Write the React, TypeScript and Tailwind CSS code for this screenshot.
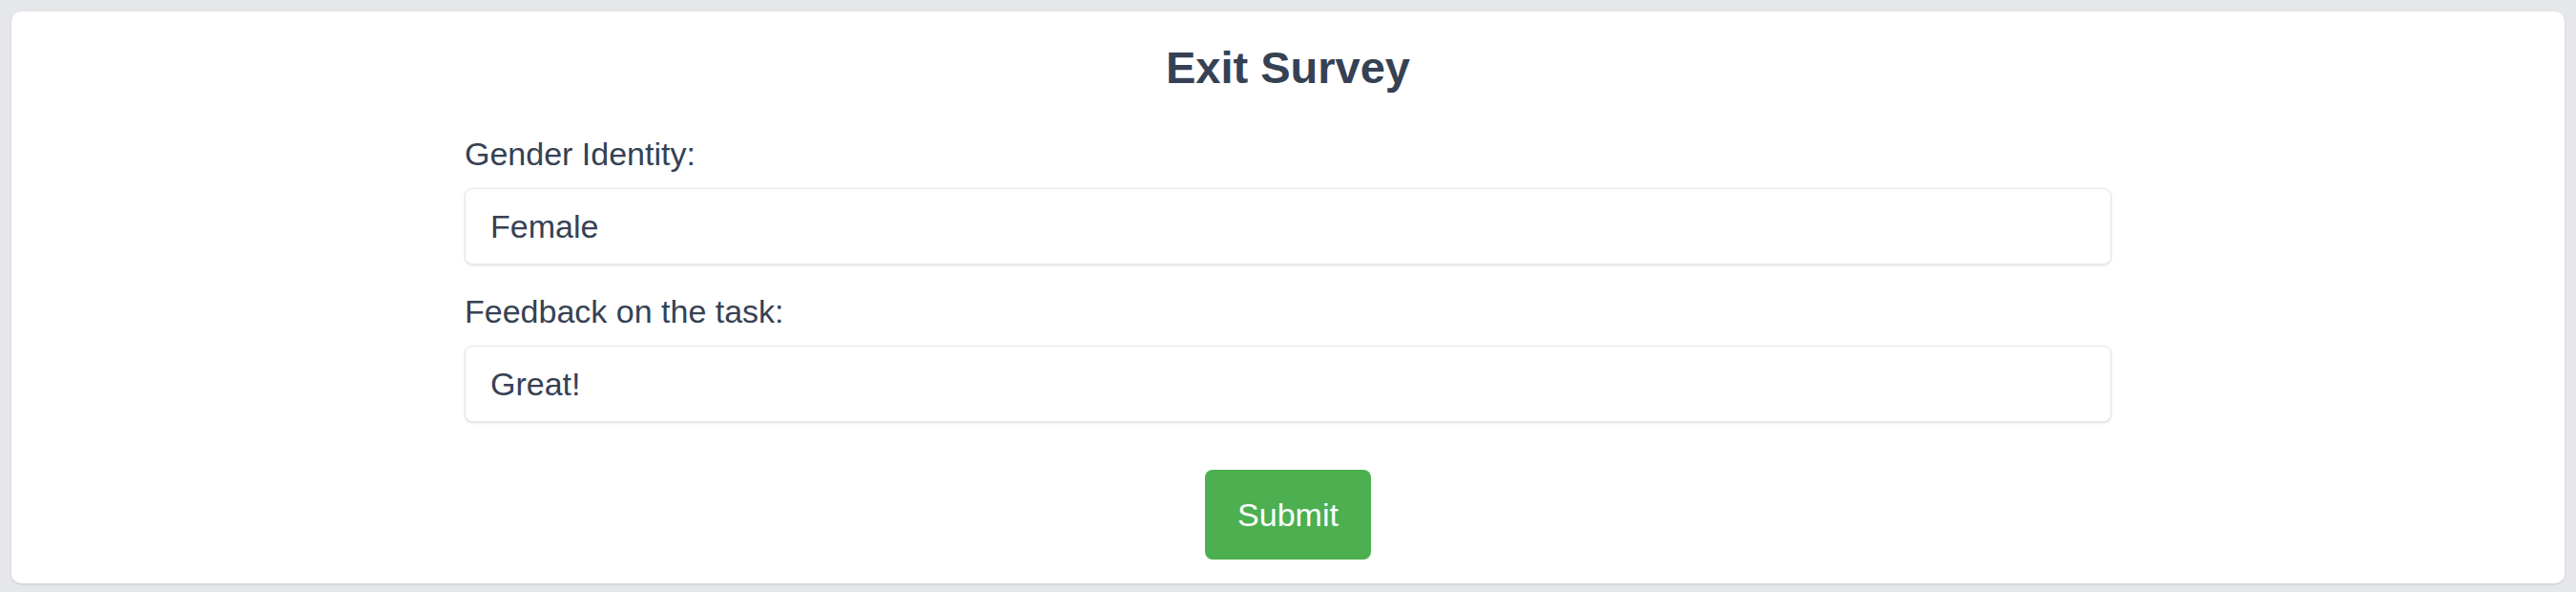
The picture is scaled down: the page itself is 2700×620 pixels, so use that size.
import { useState } from "react";

const fieldClass =
  "w-full h-[80px] rounded-lg border border-gray-200 bg-white px-[26px] text-[34px] text-gray-700 shadow-sm outline-none font-['Liberation_Sans',Arial,sans-serif]";

const App = () => {
  const [gender, setGender] = useState("Female");
  const [feedback, setFeedback] = useState("Great!");

  return (
    <div className="min-h-[620px] w-full bg-gray-200 px-3 pt-3 pb-[10px] font-['Liberation_Sans',Arial,sans-serif] text-gray-700">
      <div className="flex flex-col items-center rounded-[10px] bg-white pt-[35px] pb-[25px] shadow-sm">
        <h1 className="text-[47px] leading-none font-bold">Exit Survey</h1>

        <form
          className="mt-[50px] flex w-[1726px] flex-col"
          onSubmit={(e) => e.preventDefault()}
        >
          <label className="mb-[19px] text-[34px] leading-none">
            Gender Identity:
          </label>
          <input
            className={fieldClass}
            value={gender}
            onChange={(e) => setGender(e.target.value)}
          />

          <label className="mt-8 mb-[19px] text-[34px] leading-none">
            Feedback on the task:
          </label>
          <input
            className={fieldClass}
            value={feedback}
            onChange={(e) => setFeedback(e.target.value)}
          />
        </form>

        <button
          type="submit"
          className="mt-[50px] h-[94px] w-[174px] rounded-lg bg-[#4caf50] text-[34px] text-white"
        >
          Submit
        </button>
      </div>
    </div>
  );
};

export default App;
